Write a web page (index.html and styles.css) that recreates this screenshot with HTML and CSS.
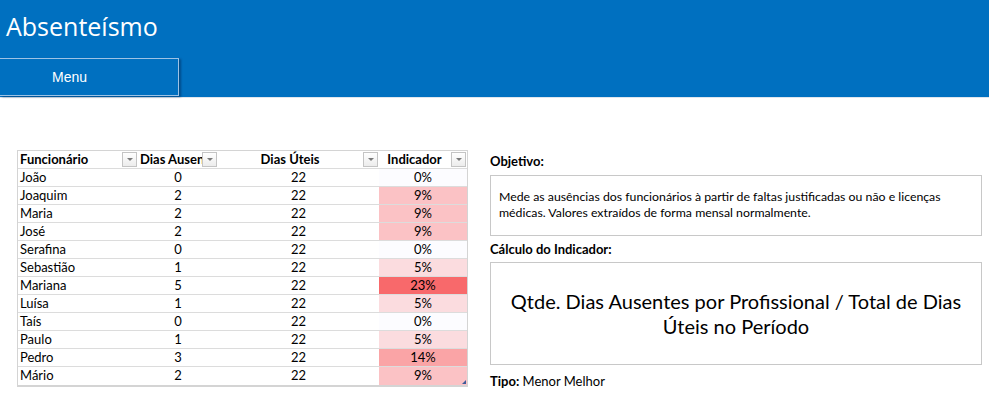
FILE: index.html
```html
<!DOCTYPE html>
<html lang="pt-BR">
  <head>
    <meta charset="UTF-8" />
    <meta name="viewport" content="width=device-width, initial-scale=1.0" />
    <title>Absenteísmo</title>
    <link rel="stylesheet" href="styles.css">
  </head>
  <body>
    <header id="topbar">
      <h1>Absenteísmo</h1>
      <button class="menu-btn">Menu</button>
    </header>

    <div id="content">
      <div class="grid">
        <div class="row head">
          <div class="cell left"><span>Funcionário</span><i class="filter"></i></div>
          <div class="cell left" title="Dias Ausentes"><span>Dias Ausen</span><i class="filter"></i></div>
          <div class="cell"><span>Dias Úteis</span><i class="filter"></i></div>
          <div class="cell"><span>Indicador</span><i class="filter"></i></div>
        </div>
        <div class="row"><div class="cell left">João</div><div class="cell">0</div><div class="cell">22</div><div class="cell ind">0%</div></div>
        <div class="row"><div class="cell left">Joaquim</div><div class="cell">2</div><div class="cell">22</div><div class="cell ind" style="background-color: #fbc2c5;">9%</div></div>
        <div class="row"><div class="cell left">Maria</div><div class="cell">2</div><div class="cell">22</div><div class="cell ind" style="background-color: #fbc2c5;">9%</div></div>
        <div class="row"><div class="cell left">José</div><div class="cell">2</div><div class="cell">22</div><div class="cell ind" style="background-color: #fbc2c5;">9%</div></div>
        <div class="row"><div class="cell left">Serafina</div><div class="cell">0</div><div class="cell">22</div><div class="cell ind">0%</div></div>
        <div class="row"><div class="cell left">Sebastião</div><div class="cell">1</div><div class="cell">22</div><div class="cell ind" style="background-color: #fbdcdf;">5%</div></div>
        <div class="row"><div class="cell left">Mariana</div><div class="cell">5</div><div class="cell">22</div><div class="cell ind" style="background-color: #f8696b;">23%</div></div>
        <div class="row"><div class="cell left">Luísa</div><div class="cell">1</div><div class="cell">22</div><div class="cell ind" style="background-color: #fbdcdf;">5%</div></div>
        <div class="row"><div class="cell left">Taís</div><div class="cell">0</div><div class="cell">22</div><div class="cell ind">0%</div></div>
        <div class="row"><div class="cell left">Paulo</div><div class="cell">1</div><div class="cell">22</div><div class="cell ind" style="background-color: #fbdcdf;">5%</div></div>
        <div class="row"><div class="cell left">Pedro</div><div class="cell">3</div><div class="cell">22</div><div class="cell ind" style="background-color: #faa4a6;">14%</div></div>
        <div class="row"><div class="cell left">Mário</div><div class="cell">2</div><div class="cell">22</div><div class="cell ind" style="background-color: #fbc2c5;">9%<i class="resize"></i></div></div>
      </div>

      <div id="info">
        <p class="label">Objetivo:</p>
        <div class="box objetivo">
          Mede as ausências dos funcionários à partir de faltas justificadas ou não e licenças
          médicas. Valores extraídos de forma mensal normalmente.
        </div>
        <p class="label">Cálculo do Indicador:</p>
        <div class="box calculo">
          Qtde. Dias Ausentes por Profissional / Total de Dias Úteis no Período
        </div>
        <p class="tipo"><b>Tipo:</b> Menor Melhor</p>
      </div>
    </div>
  </body>
</html>
```

FILE: styles.css
```css
* {
  margin: 0;
  padding: 0;
  box-sizing: border-box;
}

body {
  font-family: Lato, 'Open Sans', sans-serif;
  background-color: #fff;
  color: #000;
}

#topbar {
  height: 98px;
  background-color: #0070c0;
  border-bottom: 1px solid #dfe6ee;
  display: flex;
  flex-direction: column;
  justify-content: space-between;
}

#topbar h1 {
  color: #fff;
  font-family: 'Open Sans', sans-serif;
  font-weight: normal;
  font-size: 25px;
  padding: 10px 0 0 6px;
  line-height: 32px;
}

.menu-btn {
  width: 179px;
  height: 38px;
  margin-bottom: 1px;
  background-color: #0070c0;
  color: #fff;
  font-family: 'Liberation Sans', sans-serif;
  font-size: 14px;
  text-align: left;
  padding-left: 52px;
  border: 1px solid #9dc3e6;
  border-left: none;
  box-shadow: 2px 1px 2px rgba(0, 30, 70, 0.45);
}

#content {
  display: flex;
  padding: 52px 0 0 17px;
  gap: 22px;
}

.grid {
  width: 451px;
  font-size: 13px;
  border: 1px solid #d4d4d4;
  border-bottom-width: 2px;
  align-self: flex-start;
}

.row {
  display: grid;
  grid-template-columns: 120px 80px 161px 88px;
  height: 18px;
  border-bottom: 1px solid #dcdcdc;
}

.row:last-child {
  border-bottom: none;
}

.cell {
  position: relative;
  text-align: center;
  line-height: 17px;
  white-space: nowrap;
}

.cell.left {
  text-align: left;
  padding-left: 2px;
}

.head .cell {
  display: flex;
  justify-content: center;
  align-items: center;
  font-weight: bold;
  padding-right: 17px;
}

.head .cell.left {
  justify-content: flex-start;
}

.filter {
  position: absolute;
  right: 1px;
  top: 1px;
  width: 15px;
  height: 15px;
  border: 1px solid #c4c4c4;
  background: linear-gradient(#fff, #ececec);
}

.filter::after {
  content: '';
  position: absolute;
  left: 4px;
  top: 5px;
  border-left: 3px solid transparent;
  border-right: 3px solid transparent;
  border-top: 3px solid #7a7a7a;
}

.ind {
  background-color: #fcfcff;
}

.resize {
  position: absolute;
  right: 1px;
  bottom: 1px;
  border-left: 4px solid transparent;
  border-bottom: 4px solid #3c5a9a;
}

#info {
  width: 492px;
  padding-top: 3px;
  font-size: 13px;
}

.label {
  font-weight: bold;
  line-height: 17px;
  margin-bottom: 5px;
}

.box {
  border: 1px solid #c8c8c8;
}

.objetivo {
  height: 61px;
  padding: 13px 8px 0 8px;
  font-size: 12.3px;
  line-height: 16px;
  margin-bottom: 5px;
}

.calculo {
  height: 103px;
  display: flex;
  align-items: center;
  justify-content: center;
  text-align: center;
  font-size: 20px;
  line-height: 25px;
  padding: 0 18px;
  margin-top: -1px;
}

.tipo {
  margin-top: 8px;
  line-height: 17px;
}
```
